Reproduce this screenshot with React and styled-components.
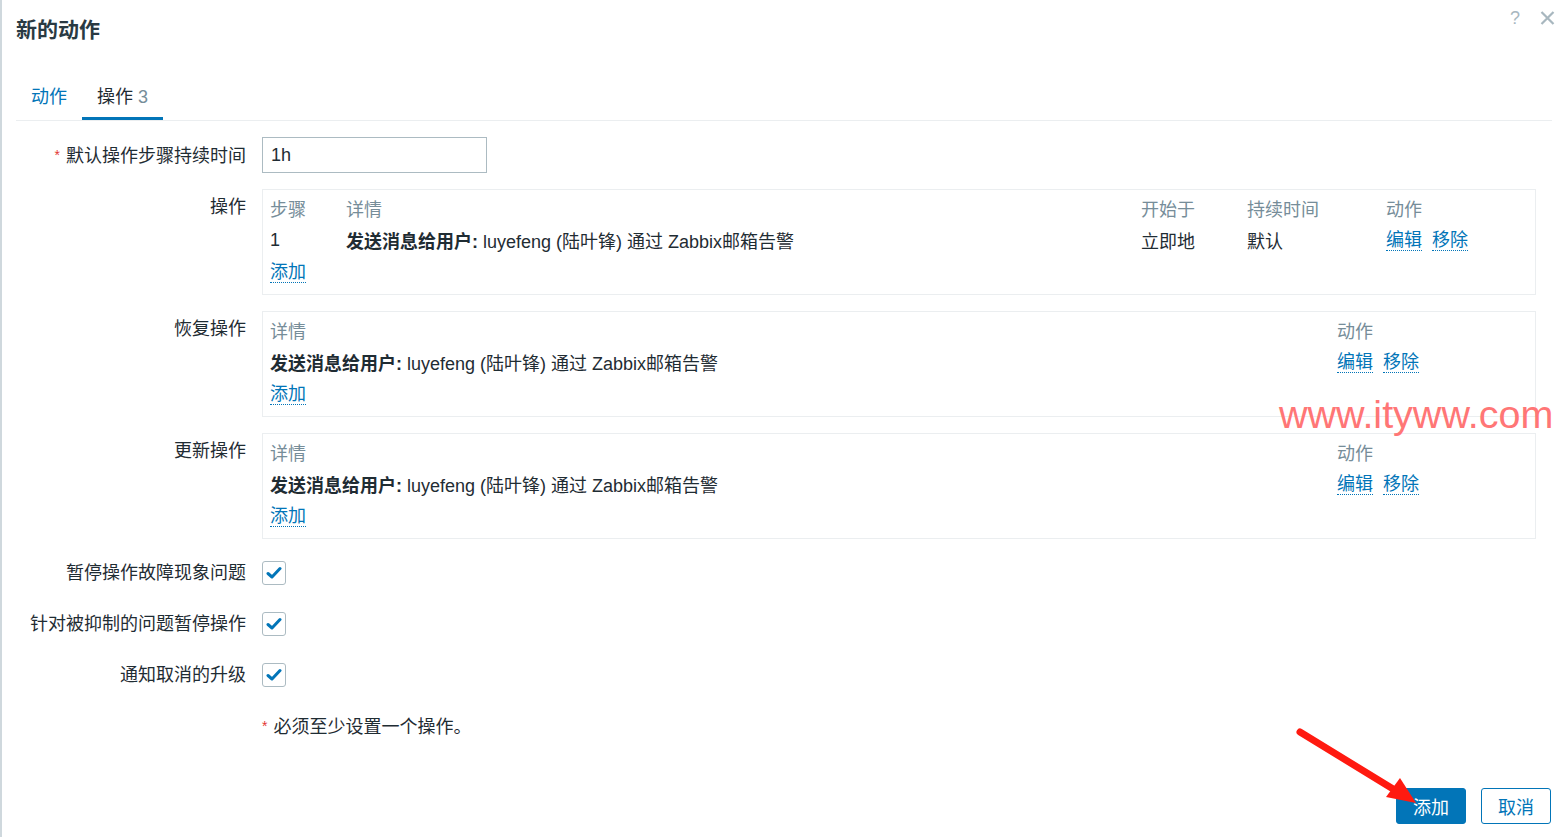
import React from "react";
import styled, { createGlobalStyle } from "styled-components";

const GlobalStyle = createGlobalStyle`
  html, body { margin: 0; padding: 0; background: #ffffff; }
  body {
    font-family: "Liberation Sans", Arial, "Noto Sans CJK SC", sans-serif;
    font-size: 18px;
    color: #1f2c33;
    overflow: hidden;
  }
  * { box-sizing: border-box; }
`;

const Page = styled.div`
  position: relative;
  width: 1563px;
  height: 837px;
  border-left: 2px solid #cfd8dd;
  padding: 0 11px 0 14px;
  overflow: hidden;
`;

const Header = styled.div`
  display: flex;
  justify-content: space-between;
  height: 75px;
`;

const Title = styled.h1`
  margin: 0;
  font-size: 21px;
  font-weight: bold;
  line-height: 60px;
  color: #2a3a43;
`;

const HeaderIcons = styled.div`
  display: flex;
  align-items: center;
  gap: 20px;
  height: 36px;
  margin-right: -3px;
`;

const HelpIcon = styled.span`
  font-size: 18px;
  line-height: 18px;
  color: #a8b7bf;
`;

const TabBar = styled.div`
  display: flex;
  border-bottom: 1px solid #ebeef0;
`;

const Tab = styled.div`
  padding: 3px 15px 0;
  line-height: 39px;
  border-bottom: 3px solid ${(p) => (p.$active ? "#0275b8" : "transparent")};
  color: ${(p) => (p.$active ? "#1f2c33" : "#0275b8")};
`;

const TabCount = styled.span`
  color: #768d99;
`;

const Form = styled.div`
  display: grid;
  grid-template-columns: 230px 1fr;
  column-gap: 16px;
  row-gap: 16px;
  padding: 16px 16px 0 0;
`;

const Label = styled.div`
  text-align: right;
  line-height: 32px;
  padding-top: 2px;
  white-space: nowrap;
`;

const Req = styled.span`
  color: #e33734;
  font-size: 14px;
  margin-right: 6px;
  vertical-align: 2px;
`;

const TextInput = styled.input`
  width: 225px;
  height: 36px;
  border: 1px solid #acbbc2;
  padding: 0 8px;
  font: inherit;
  color: #1f2c33;
  outline: none;
`;

const OpBox = styled.div`
  border: 1px solid #ebeef0;
  padding: 2px 8px 6px 7px;
  display: grid;
  grid-template-columns: ${(p) => p.$cols};
  grid-auto-rows: 32px;
  align-items: center;
`;

const HeadCell = styled.div`
  color: #768d99;
`;

const Cell = styled.div`
  white-space: nowrap;
`;

const FullCell = styled.div`
  grid-column: 1 / -1;
`;

const Strong = styled.b`
  font-weight: bold;
`;

const Links = styled.div`
  display: flex;
  gap: 10px;
`;

const Link = styled.a`
  display: inline-block;
  color: #0275b8;
  line-height: 20px;
  border-bottom: 1px dotted #0275b8;
  cursor: pointer;
`;

const CheckRow = styled.div`
  height: 35px;
  display: flex;
  align-items: center;
`;

const CheckBox = styled.span`
  width: 24px;
  height: 24px;
  border: 1px solid #acbbc2;
  border-radius: 3px;
  display: flex;
  align-items: center;
  justify-content: center;
  background: #fff;
`;

const Note = styled.div`
  line-height: 35px;
  padding-top: 1px;
`;

const Footer = styled.div`
  display: flex;
  justify-content: flex-end;
  gap: 15px;
  margin-top: 43px;
  margin-right: 1px;
`;

const Button = styled.button`
  height: 36px;
  padding: 0 15px;
  font: inherit;
  border-radius: 3px;
  border: 1px solid #0275b8;
  background: ${(p) => (p.$primary ? "#0275b8" : "#ffffff")};
  color: ${(p) => (p.$primary ? "#ffffff" : "#0275b8")};
  min-width: 70px;
`;

const Watermark = styled.div`
  position: absolute;
  left: 1277px;
  top: 395px;
  font-family: "Liberation Sans", Arial, sans-serif;
  font-size: 39.5px;
  line-height: 1;
  color: #ff7676;
  white-space: nowrap;
  pointer-events: none;
`;

const ArrowSvg = styled.svg`
  position: absolute;
  left: 0;
  top: 0;
  pointer-events: none;
`;

const Check = () => (
  <CheckBox>
    <svg width="16" height="14" viewBox="0 0 16 14">
      <path d="M2 7.5 L6 11 L14 2.5" fill="none" stroke="#0275b8" strokeWidth="3" strokeLinecap="round" strokeLinejoin="round" />
    </svg>
  </CheckBox>
);

const Detail = () => (
  <>
    <Strong>发送消息给用户:</Strong> luyefeng (陆叶锋) 通过 Zabbix邮箱告警
  </>
);

export default function App() {
  return (
    <>
      <GlobalStyle />
      <Page>
        <Header>
          <Title>新的动作</Title>
          <HeaderIcons>
            <HelpIcon>?</HelpIcon>
            <svg width="15" height="14" viewBox="0 0 15 14">
              <path d="M1.5 1 L13.5 13 M13.5 1 L1.5 13" stroke="#a8b7bf" strokeWidth="2.2" />
            </svg>
          </HeaderIcons>
        </Header>

        <TabBar>
          <Tab>动作</Tab>
          <Tab $active>
            操作 <TabCount>3</TabCount>
          </Tab>
        </TabBar>

        <Form>
          <Label>
            <Req>*</Req>默认操作步骤持续时间
          </Label>
          <div>
            <TextInput defaultValue="1h" />
          </div>

          <Label>操作</Label>
          <OpBox $cols="76px 1fr 106px 139px 141px">
            <HeadCell>步骤</HeadCell>
            <HeadCell>详情</HeadCell>
            <HeadCell>开始于</HeadCell>
            <HeadCell>持续时间</HeadCell>
            <HeadCell>动作</HeadCell>
            <Cell>1</Cell>
            <Cell>
              <Detail />
            </Cell>
            <Cell>立即地</Cell>
            <Cell>默认</Cell>
            <Links>
              <Link>编辑</Link>
              <Link>移除</Link>
            </Links>
            <FullCell>
              <Link>添加</Link>
            </FullCell>
          </OpBox>

          <Label>恢复操作</Label>
          <OpBox $cols="1fr 190px">
            <HeadCell>详情</HeadCell>
            <HeadCell>动作</HeadCell>
            <Cell>
              <Detail />
            </Cell>
            <Links>
              <Link>编辑</Link>
              <Link>移除</Link>
            </Links>
            <FullCell>
              <Link>添加</Link>
            </FullCell>
          </OpBox>

          <Label>更新操作</Label>
          <OpBox $cols="1fr 190px">
            <HeadCell>详情</HeadCell>
            <HeadCell>动作</HeadCell>
            <Cell>
              <Detail />
            </Cell>
            <Links>
              <Link>编辑</Link>
              <Link>移除</Link>
            </Links>
            <FullCell>
              <Link>添加</Link>
            </FullCell>
          </OpBox>

          <Label>暂停操作故障现象问题</Label>
          <CheckRow>
            <Check />
          </CheckRow>

          <Label>针对被抑制的问题暂停操作</Label>
          <CheckRow>
            <Check />
          </CheckRow>

          <Label>通知取消的升级</Label>
          <CheckRow>
            <Check />
          </CheckRow>

          <div />
          <Note>
            <Req>*</Req>必须至少设置一个操作。
          </Note>
        </Form>

        <Footer>
          <Button $primary>添加</Button>
          <Button>取消</Button>
        </Footer>

        <Watermark>www.ityww.com</Watermark>
        <ArrowSvg width="1563" height="837" viewBox="0 0 1563 837">
          <line x1="1298" y1="732" x2="1396" y2="792" stroke="#ff1a10" strokeWidth="7" strokeLinecap="round" />
          <polygon points="1414,803 1384,797 1398,778" fill="#ff1a10" />
        </ArrowSvg>
      </Page>
    </>
  );
}
